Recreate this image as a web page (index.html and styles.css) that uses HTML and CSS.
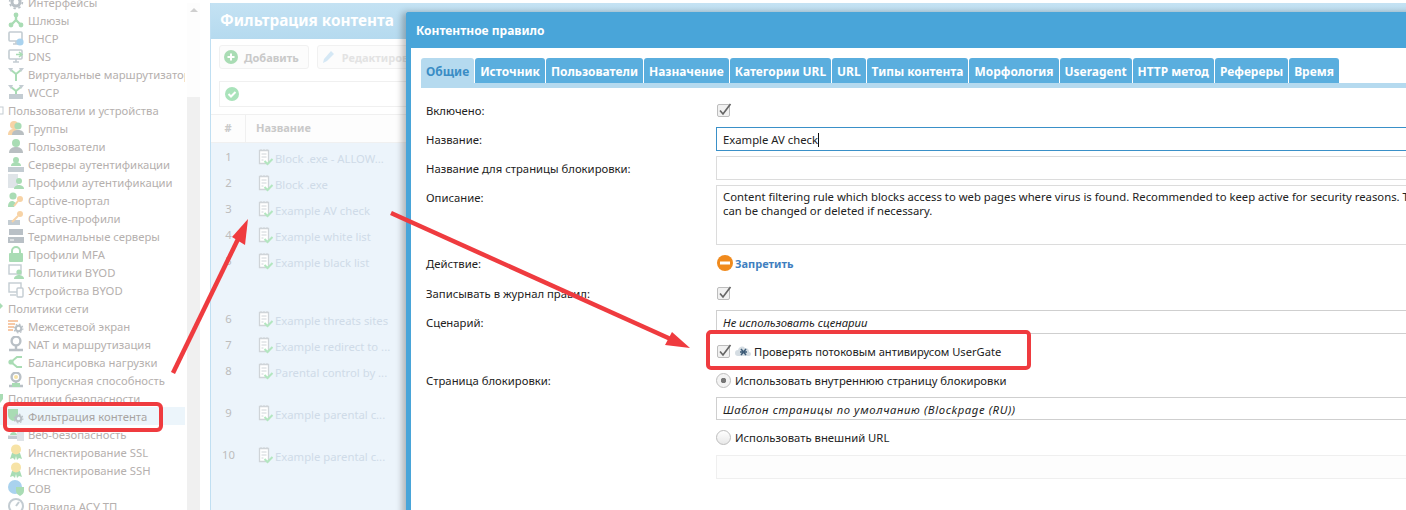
FILE: index.html
```html
<!DOCTYPE html>
<html lang="ru">
  <head>
    <meta charset="UTF-8" />
    <title>Контентное правило</title>
    <link rel="stylesheet" href="styles.css">
  </head>

  <body>
    <svg class="defs" width="0" height="0">
      <symbol id="i-gate" viewBox="0 0 16 16"><path d="M8 2v6M8 8l-5 5M8 8l5 5" stroke="#a9dcb4" stroke-width="2.4" fill="none"/><circle cx="8" cy="3" r="2.4" fill="#a9dcb4"/><circle cx="3" cy="13" r="2.4" fill="#a9dcb4"/><circle cx="13" cy="13" r="2.4" fill="#a9dcb4"/></symbol>
      <symbol id="i-mon" viewBox="0 0 16 16"><rect x="1" y="2" width="13" height="9" rx="1" fill="#fff" stroke="#c3ccd2" stroke-width="1.6"/><path d="M5 14h6M8 11v3" stroke="#c3ccd2" stroke-width="1.6"/></symbol>
      <symbol id="i-dhcp" viewBox="0 0 16 16"><use href="#i-mon"/><circle cx="12" cy="12" r="3.6" fill="#a9d2ee"/></symbol>
      <symbol id="i-dns" viewBox="0 0 16 16"><use href="#i-mon"/><path d="M8 6.5h5M11 4l3 2.5-3 2.5" stroke="#a9dcb4" stroke-width="1.6" fill="none"/></symbol>
      <symbol id="i-vrt" viewBox="0 0 16 16"><path d="M8 15V8L3 4M8 8l5-4" stroke="#a9dcb4" stroke-width="2" fill="none"/><path d="M0 2h5L3 6zM16 2h-5l2 4z" fill="#c3ccd2"/></symbol>
      <symbol id="i-wccp" viewBox="0 0 16 16"><path d="M8 10V7L3 3M8 7l5-4" stroke="#a9dcb4" stroke-width="2" fill="none"/><path d="M0 1h5L3 5zM16 1h-5l2 4z" fill="#c3ccd2"/><rect x="1" y="10" width="14" height="5" fill="#c3ccd2"/></symbol>
      <symbol id="i-user" viewBox="0 0 16 16"><circle cx="8" cy="5" r="4" fill="#a9dcb4"/><path d="M1 15c0-5 4-6 7-6s7 1 7 6z" fill="#b9bfc2"/></symbol>
      <symbol id="i-group" viewBox="0 0 16 16"><circle cx="6" cy="5" r="4" fill="#f7d3a6"/><path d="M0 15c0-5 3-6 6-6s6 1 6 6z" fill="#f7d3a6"/><circle cx="10" cy="6" r="3.6" fill="#a9dcb4"/><path d="M4 15c0-4 3-5 6-5s6 1 6 5z" fill="#b9bfc2"/></symbol>
      <symbol id="i-auth" viewBox="0 0 16 16"><circle cx="8" cy="4" r="3" fill="#a9dcb4"/><path d="M3 10c0-3 3-4 5-4s5 1 5 4z" fill="#a9dcb4"/><rect x="0" y="11" width="16" height="5" fill="#c3ccd2"/></symbol>
      <symbol id="i-prof" viewBox="0 0 16 16"><rect x="0" y="0" width="10" height="14" fill="#dfe4e8"/><circle cx="11" cy="7" r="3" fill="#a9dcb4"/><path d="M6 15c0-3 3-4 5-4s5 1 5 4z" fill="#a9dcb4"/></symbol>
      <symbol id="i-capt" viewBox="0 0 16 16"><circle cx="5" cy="4" r="3.6" fill="#a9dcb4"/><path d="M0 15c0-5 2-6 5-6l3 2-2 4z" fill="#a9dcb4"/><circle cx="12" cy="7" r="3" fill="#f7d3a6"/><path d="M10 9l-4 5" stroke="#f7d3a6" stroke-width="2"/></symbol>
      <symbol id="i-capr" viewBox="0 0 16 16"><rect x="0" y="10" width="12" height="5" fill="#c3ccd2"/><circle cx="12" cy="4" r="3" fill="#f7d3a6"/><path d="M10 6l-6 6" stroke="#f7d3a6" stroke-width="2"/></symbol>
      <symbol id="i-term" viewBox="0 0 16 16"><rect x="1" y="1" width="14" height="6" fill="#b9c0c6"/><rect x="0" y="9" width="16" height="6" fill="#b9c0c6"/><path d="M2 12h4" stroke="#fff"/></symbol>
      <symbol id="i-lock" viewBox="0 0 16 16"><path d="M4 8V5a4 4 0 0 1 8 0v3" stroke="#a9dcb4" stroke-width="2" fill="none"/><rect x="1" y="7" width="14" height="9" rx="1" fill="#a9dcb4"/></symbol>
      <symbol id="i-byod" viewBox="0 0 16 16"><rect x="1" y="1" width="12" height="9" fill="#fff" stroke="#c3ccd2" stroke-width="1.4"/><circle cx="11" cy="8" r="2.6" fill="#a9dcb4"/><path d="M6 15c0-3 3-4 5-4s5 1 5 4z" fill="#a9dcb4"/></symbol>
      <symbol id="i-dev" viewBox="0 0 16 16"><rect x="1" y="1" width="12" height="9" fill="#fff" stroke="#c3ccd2" stroke-width="1.4"/><path d="M2 13h6" stroke="#c3ccd2" stroke-width="1.4"/><rect x="9" y="6" width="6" height="9" rx="1" fill="#fff" stroke="#c3ccd2" stroke-width="1.4"/></symbol>
      <symbol id="i-gear" viewBox="0 0 16 16"><circle cx="8" cy="8" r="4" fill="none" stroke="#b9c0c6" stroke-width="3"/><circle cx="8" cy="8" r="6.4" fill="none" stroke="#b9c0c6" stroke-width="1.6" stroke-dasharray="2.4 2.6"/></symbol>
      <symbol id="i-fw" viewBox="0 0 16 16"><path d="M0 2h10v2H0zM0 5h7v2H0zM0 8h6v2H0zM0 11h5v2H0z" fill="#f6c9a8"/><use href="#i-gear" x="5" y="5" width="11" height="11"/></symbol>
      <symbol id="i-nat" viewBox="0 0 16 16"><circle cx="8" cy="5" r="4.4" fill="none" stroke="#b9c0c6" stroke-width="2.4"/><path d="M8 9v4M1 14h14" stroke="#b9c0c6" stroke-width="2.4"/></symbol>
      <symbol id="i-bal" viewBox="0 0 16 16"><circle cx="3" cy="8" r="2.6" fill="#a9dcb4"/><path d="M3 8l6-5h5M3 8l6 5h5" stroke="#a9dcb4" stroke-width="2" fill="none"/></symbol>
      <symbol id="i-band" viewBox="0 0 16 16"><use href="#i-nat"/><circle cx="8" cy="5" r="2" fill="#f7e3a6"/><path d="M4 11h8v4H4z" fill="#a9dcb4"/></symbol>
      <symbol id="i-filt" viewBox="0 0 16 16"><path d="M0 1h10v6c0 3-2 5-5 6-3-1-5-3-5-6z" fill="#a9dcb4"/><use href="#i-gear" x="5" y="5" width="11" height="11"/></symbol>
      <symbol id="i-web" viewBox="0 0 16 16"><use href="#i-auth" width="11" height="15"/><rect x="9" y="6" width="7" height="9" fill="#dfe4e8"/></symbol>
      <symbol id="i-ssl" viewBox="0 0 16 16"><path d="M4 9l-2 6 3-1 2 2 1-4 1 4 2-2 3 1-2-6z" fill="#a9dcb4"/><circle cx="8" cy="5.4" r="5" fill="#f7e3a6"/></symbol>
      <symbol id="i-cob" viewBox="0 0 16 16"><circle cx="7" cy="7" r="7" fill="#a9d2ee"/><path d="M8 7h8v4c0 2-2 4-4 5-2-1-4-3-4-5z" fill="#a9dcb4"/></symbol>
      <symbol id="i-acs" viewBox="0 0 16 16"><circle cx="8" cy="8" r="7" fill="#fff" stroke="#c3ccd2" stroke-width="2"/><path d="M8 8l3-4" stroke="#c3ccd2" stroke-width="2"/></symbol>
      <symbol id="i-rule" viewBox="0 0 16 18"><path d="M1.5 2.500h9v13h-9z" fill="#fff" stroke="#cfd4d8" stroke-width="1.300"/><path d="M3 1v2M6 1v2M9 1v2M3.500 6h5M3.500 9h5M3.500 12h2" stroke="#cfd4d8"/><path d="M6.500 13l3 3 5-5" stroke="#b3e6c0" stroke-width="2" fill="none"/></symbol>
      <symbol id="i-check" viewBox="0 0 15 15"><rect x="0.500" y="1.500" width="12" height="12" rx="1.500" fill="#f1f1f1" stroke="#bdbdbd"/><path d="M3 7.500l3 3.500L13.500 1" stroke="#666" stroke-width="1.700" fill="none"/></symbol>
    </svg>

    <div class="page">
      <aside class="sidebar">
        <ul class="tree">
          <li class="item"><svg class="ico"><use href="#i-gear"/></svg>Интерфейсы</li>
          <li class="item"><svg class="ico"><use href="#i-gate"/></svg>Шлюзы</li>
          <li class="item"><svg class="ico"><use href="#i-dhcp"/></svg>DHCP</li>
          <li class="item"><svg class="ico"><use href="#i-dns"/></svg>DNS</li>
          <li class="item"><svg class="ico"><use href="#i-vrt"/></svg>Виртуальные маршрутизаторы</li>
          <li class="item"><svg class="ico"><use href="#i-wccp"/></svg>WCCP</li>
          <li class="group"><svg class="grp" viewBox="0 0 8 12"><rect x="-4" y="3" width="7" height="7" fill="#fff" stroke="#c3ccd2"/></svg>Пользователи и устройства</li>
          <li class="item"><svg class="ico"><use href="#i-group"/></svg>Группы</li>
          <li class="item"><svg class="ico"><use href="#i-user"/></svg>Пользователи</li>
          <li class="item"><svg class="ico"><use href="#i-auth"/></svg>Серверы аутентификации</li>
          <li class="item"><svg class="ico"><use href="#i-prof"/></svg>Профили аутентификации</li>
          <li class="item"><svg class="ico"><use href="#i-capt"/></svg>Captive-портал</li>
          <li class="item"><svg class="ico"><use href="#i-capr"/></svg>Captive-профили</li>
          <li class="item"><svg class="ico"><use href="#i-term"/></svg>Терминальные серверы</li>
          <li class="item"><svg class="ico"><use href="#i-lock"/></svg>Профили MFA</li>
          <li class="item"><svg class="ico"><use href="#i-byod"/></svg>Политики BYOD</li>
          <li class="item"><svg class="ico"><use href="#i-dev"/></svg>Устройства BYOD</li>
          <li class="group"><svg class="grp" viewBox="0 0 8 12"><path d="M-1 0l4 4-4 4z" fill="#a9dcb4"/></svg>Политики сети</li>
          <li class="item"><svg class="ico"><use href="#i-fw"/></svg>Межсетевой экран</li>
          <li class="item"><svg class="ico"><use href="#i-nat"/></svg>NAT и маршрутизация</li>
          <li class="item"><svg class="ico"><use href="#i-bal"/></svg>Балансировка нагрузки</li>
          <li class="item"><svg class="ico"><use href="#i-band"/></svg>Пропускная способность</li>
          <li class="group"><svg class="grp" viewBox="0 0 8 12"><path d="M-3 2h6v5l-3 4-3-4z" fill="#a9dcb4"/></svg>Политики безопасности</li>
          <li class="item selected"><svg class="ico"><use href="#i-filt"/></svg>Фильтрация контента</li>
          <li class="item"><svg class="ico"><use href="#i-web"/></svg>Веб-безопасность</li>
          <li class="item"><svg class="ico"><use href="#i-ssl"/></svg>Инспектирование SSL</li>
          <li class="item"><svg class="ico"><use href="#i-ssl"/></svg>Инспектирование SSH</li>
          <li class="item"><svg class="ico"><use href="#i-cob"/></svg>СОВ</li>
          <li class="item"><svg class="ico"><use href="#i-acs"/></svg>Правила АСУ ТП</li>
        </ul>
        <div class="scrollbar">
          <div class="scroll-thumb"><span class="scroll-up"></span></div>
        </div>
      </aside>

      <main class="panel">
        <h2 class="panel-title">Фильтрация контента</h2>
        <div class="toolbar">
          <span class="btn">
            <svg class="btn-ico" viewBox="0 0 14 14"><circle cx="7" cy="7" r="7" fill="#a9dcb4"/><path d="M3.500 7h7M7 3.500v7" stroke="#fff" stroke-width="2"/></svg>
            Добавить
          </span>
          <span class="btn btn-off">
            <svg class="btn-ico" viewBox="0 0 14 14"><path d="M1 13l1-4 7-8 3 3-7 7z" fill="#d5e8f5"/></svg>
            Редактировать
          </span>
        </div>
        <div class="filter">
          <svg class="filter-ico" viewBox="0 0 14 14"><circle cx="7" cy="7" r="7" fill="#a9e3ba"/><path d="M3.500 7l2.500 2.500 4.500-4.500" stroke="#fff" stroke-width="2" fill="none"/></svg>
        </div>
        <div class="thead">
          <div class="col-num">#</div>
          <div class="col-name">Название</div>
        </div>
        <div class="tbody">
          <div class="row"><span class="num">1</span><svg class="rule-ico"><use href="#i-rule"/></svg><span class="rule">Block .exe - ALLOW...</span></div>
          <div class="row"><span class="num">2</span><svg class="rule-ico"><use href="#i-rule"/></svg><span class="rule">Block .exe</span></div>
          <div class="row"><span class="num">3</span><svg class="rule-ico"><use href="#i-rule"/></svg><span class="rule">Example AV check</span></div>
          <div class="row"><span class="num">4</span><svg class="rule-ico"><use href="#i-rule"/></svg><span class="rule">Example white list</span></div>
          <div class="row row-58"><span class="num">5</span><svg class="rule-ico"><use href="#i-rule"/></svg><span class="rule">Example black list</span></div>
          <div class="row"><span class="num">6</span><svg class="rule-ico"><use href="#i-rule"/></svg><span class="rule">Example threats sites</span></div>
          <div class="row"><span class="num">7</span><svg class="rule-ico"><use href="#i-rule"/></svg><span class="rule">Example redirect to ...</span></div>
          <div class="row row-42"><span class="num">8</span><svg class="rule-ico"><use href="#i-rule"/></svg><span class="rule">Parental control by ...</span></div>
          <div class="row row-42"><span class="num">9</span><svg class="rule-ico"><use href="#i-rule"/></svg><span class="rule">Example parental c...</span></div>
          <div class="row"><span class="num">10</span><svg class="rule-ico"><use href="#i-rule"/></svg><span class="rule">Example parental c...</span></div>
        </div>
      </main>
    </div>

    <section class="modal">
      <header class="modal-head">Контентное правило</header>
      <div class="modal-body">
        <nav class="tabs">
          <span class="tab active">Общие</span>
          <span class="tab">Источник</span>
          <span class="tab">Пользователи</span>
          <span class="tab">Назначение</span>
          <span class="tab">Категории URL</span>
          <span class="tab">URL</span>
          <span class="tab">Типы контента</span>
          <span class="tab">Морфология</span>
          <span class="tab">Useragent</span>
          <span class="tab">HTTP метод</span>
          <span class="tab">Рефереры</span>
          <span class="tab">Время</span>
        </nav>

        <form class="form">
          <label class="lbl">Включено:</label>
          <div class="val"><svg class="check"><use href="#i-check"/></svg></div>

          <label class="lbl">Название:</label>
          <div class="field focus">Example AV check<span class="caret"></span></div>

          <label class="lbl">Название для страницы блокировки:</label>
          <div class="field"></div>

          <label class="lbl lbl-top">Описание:</label>
          <div class="field area">Content filtering rule which blocks access to web pages where virus is found. Recommended to keep active for security reasons. This rule<br>can be changed or deleted if necessary.</div>

          <label class="lbl">Действие:</label>
          <div class="val action">
            <svg class="action-ico" viewBox="0 0 16 16"><circle cx="8" cy="8" r="8" fill="#f08a1d"/><rect x="3" y="6.500" width="10" height="3" fill="#fff"/></svg>
            <span class="action-text">Запретить</span>
          </div>

          <label class="lbl">Записывать в журнал правил:</label>
          <div class="val"><svg class="check"><use href="#i-check"/></svg></div>

          <label class="lbl">Сценарий:</label>
          <div class="field select">Не использовать сценарии</div>

          <span></span>
          <div class="val av">
            <svg class="check"><use href="#i-check"/></svg>
            <svg class="av-ico" viewBox="0 0 16 14"><path d="M3 11a3 3 0 0 1 0-6 4 4 0 0 1 7-2 3.500 3.500 0 0 1 4 4 2 2 0 0 1 0 4z" fill="#d5dde3"/><path d="M6 4l5 6M11 4l-5 6M5 7h7" stroke="#3e5c78" stroke-width="1.500"/></svg>
            Проверять потоковым антивирусом UserGate
          </div>

          <label class="lbl">Страница блокировки:</label>
          <div class="val short"><span class="radio on"></span>Использовать внутреннюю страницу блокировки</div>

          <span></span>
          <div class="field select short template">Шаблон страницы по умолчанию (Blockpage (RU))</div>

          <span></span>
          <div class="val tall"><span class="radio"></span>Использовать внешний URL</div>

          <span></span>
          <div class="field off"></div>
        </form>
      </div>
    </section>

    <svg class="marks" viewBox="0 0 1406 510">
      <g fill="none" stroke="#ef3b3f" stroke-width="4">
        <rect x="5" y="404" width="156" height="26" rx="4"/>
        <rect x="708" y="332" width="321" height="36" rx="3"/>
      </g>
      <g stroke="#ef3b3f" stroke-width="4.500">
        <path d="M173 373L240 235"/>
        <path d="M391 213L675 341"/>
      </g>
      <g fill="#ef3b3f">
        <path d="M248 219L232 237L245 245z"/>
        <path d="M690 348L665 345L672 332z"/>
      </g>
    </svg>
  </body>
</html>
```

FILE: styles.css
```css
* {
  box-sizing: border-box;
}

html,
body {
  margin: 0;
  height: 100%;
  overflow: hidden;
}

body {
  font-family: "Noto Sans", Tahoma, sans-serif;
  font-size: 11.3px;
  color: #222;
  background: #fff;
}

.defs {
  position: absolute;
}

.page {
  display: flex;
  height: 510px;
}

/* left tree */
.sidebar {
  width: 210px;
  flex: none;
  display: flex;
  overflow: hidden;
}

.tree {
  list-style: none;
  margin: -7px 0 0;
  padding: 0;
  width: 185px;
  height: 522px;
  flex: none;
  overflow: hidden;
  color: #b5b0ae;
}

.item,
.group {
  height: 18px;
  line-height: 18px;
  padding: 2px 0 0 8px;
  white-space: nowrap;
  overflow: hidden;
  display: flex;
  align-items: center;
}

.group {
  padding-left: 0;
}

.grp {
  width: 8px;
  height: 12px;
  margin-top: -2px;
  flex: none;
}

.selected {
  background: #ecf5fb;
  color: #a8a4a2;
}

.ico {
  width: 16px;
  height: 16px;
  margin: -2px 4px 0 0;
  flex: none;
}

.scrollbar {
  width: 13px;
  margin: 3px 0 0 2px;
  background: #f0f0f0;
  flex: none;
}

.scroll-thumb {
  height: 94px;
  background: #fdfdfd;
  position: relative;
}

.scroll-up {
  position: absolute;
  left: 3px;
  top: 5px;
  border: 4px solid transparent;
  border-top: 0;
  border-bottom: 4px solid #cfcfcf;
}

/* list behind the dialog */
.panel {
  flex: 1;
  margin-top: 3px;
  border-left: 1px solid #c0dff2;
  min-width: 0;
  background: #fff;
}

.panel-title {
  margin: 0;
  height: 36px;
  line-height: 34px;
  padding-left: 9px;
  font-size: 15.3px;
  color: #fff;
  background: linear-gradient(#c4e2f3, #b5daef);
  white-space: nowrap;
}

.toolbar {
  display: flex;
  gap: 8px;
  padding: 6px 8px 0;
  height: 30px;
}

.btn {
  height: 24px;
  padding: 0 9px 0 4px;
  display: flex;
  align-items: center;
  gap: 6px;
  font-size: 11px;
  font-weight: bold;
  color: #c9c9c9;
  border: 1px solid #f1f1f1;
  border-radius: 3px;
  background: #fcfcfc;
  white-space: nowrap;
}

.btn-off {
  color: #e3e3e3;
}

.btn-ico {
  width: 14px;
  height: 14px;
}

.filter {
  margin: 12px 0 7px 8px;
  height: 26px;
  width: 400px;
  border: 1px solid #f0f0f0;
  display: flex;
  align-items: center;
  padding-left: 5px;
}

.filter-ico {
  width: 14px;
  height: 14px;
}

.thead {
  display: flex;
  height: 29px;
  line-height: 25px;
  font-size: 11px;
  font-weight: bold;
  color: #c9c9c9;
  border-top: 1px solid #f0f0f0;
  border-bottom: 1px solid #f0f0f0;
  background: #fdfdfd;
}

.col-num {
  width: 35px;
  text-align: center;
  border-right: 1px solid #f0f0f0;
}

.col-name {
  padding-left: 10px;
}

.tbody {
  background: #ecf4fb;
  height: 370px;
}

.row {
  display: flex;
  height: 26px;
  padding-top: 5px;
}

.row-58 {
  height: 58px;
}

.row-42 {
  height: 42px;
}

.num {
  width: 35px;
  text-align: center;
  color: #bdbdbd;
  line-height: 17px;
}

.rule-ico {
  width: 16px;
  height: 18px;
  margin: 0 1px 0 12px;
  flex: none;
}

.rule {
  color: #cfdbe8;
  line-height: 21px;
  white-space: nowrap;
}

/* dialog */
.modal {
  position: absolute;
  left: 406px;
  top: 12px;
  width: 1100px;
  height: 520px;
  background: #fff;
  border-left: 5px solid #49a5d9;
  border-radius: 3px 0 0 0;
  box-shadow: -4px 0 6px rgba(0, 0, 0, 0.25);
}

.modal-head {
  height: 36px;
  line-height: 37px;
  margin-left: -5px;
  padding-left: 10px;
  background: #49a5d9;
  color: #fff;
  font-size: 12px;
  font-weight: bold;
  border-radius: 3px 0 0 0;
}

.modal-body {
  padding: 10px 0 0 10px;
}

.tabs {
  display: flex;
  gap: 1px;
  height: 30px;
  border-bottom: 5px solid #b5daef;
}

.tab {
  height: 25px;
  line-height: 27px;
  padding: 0 5px;
  color: #fff;
  font-size: 11.95px;
  font-weight: bold;
  background: #5aaede;
  border-radius: 3px 3px 0 0;
  white-space: nowrap;
}

.active {
  background: #b5daef;
  color: #3a8dc5;
}

.form {
  display: grid;
  grid-template-columns: 290px 1fr;
  row-gap: 5px;
  align-items: center;
  padding: 10px 0 0 5px;
}

.lbl {
  white-space: nowrap;
}

.lbl-top {
  align-self: start;
  padding-top: 5px;
}

.val {
  display: flex;
  align-items: center;
  height: 24px;
  white-space: nowrap;
}

.tall {
  height: 25px;
}

.check {
  width: 15px;
  height: 15px;
  flex: none;
  margin-left: 1px;
}

.field {
  height: 24px;
  line-height: 24px;
  padding: 0 6px;
  border: 1px solid #dcdcdc;
  white-space: nowrap;
  overflow: hidden;
}

.focus {
  border-color: #3a90c8;
}

.caret {
  display: inline-block;
  width: 1px;
  height: 14px;
  background: #111;
  vertical-align: -3px;
}

.area {
  height: 60px;
  line-height: 14px;
  padding-top: 4px;
}

.action {
  height: 26px;
}

.action-ico {
  width: 16px;
  height: 16px;
  margin: 0 2px 0 1px;
}

.action-text {
  font-size: 11px;
  font-weight: bold;
  color: #3f7fc0;
}

.select {
  font-style: italic;
  border-color: #cfcfcf;
  background: #fff;
}

.template {
  letter-spacing: 0.6px;
}

.av {
  height: 25px;
  gap: 3px;
  font-size: 11.15px;
}

.av-ico {
  width: 16px;
  height: 14px;
  flex: none;
}

.short {
  height: 23px;
}

.radio {
  width: 15px;
  height: 15px;
  margin-right: 4px;
  flex: none;
  border: 1px solid #bdbdbd;
  border-radius: 50%;
  background: linear-gradient(#fff, #e8e8e8);
}

.on {
  background: radial-gradient(circle, #777 0 2.500px, #f3f3f3 3px);
}

.off {
  border-color: #efefef;
  background: #fdfdfd;
}

/* annotation layer drawn over the screenshot */
.marks {
  position: absolute;
  left: 0;
  top: 0;
  width: 1406px;
  height: 510px;
  pointer-events: none;
}
```
